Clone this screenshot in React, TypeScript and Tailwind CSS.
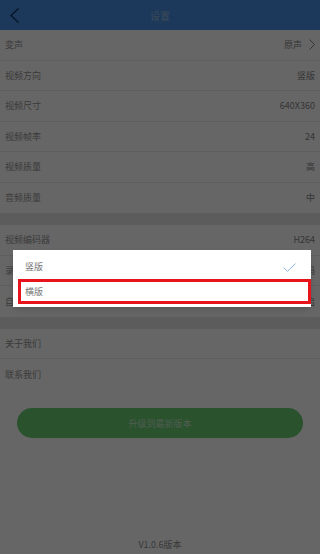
import { useState } from "react";

// Settings screen with a dimmed backdrop and the "视频方向" picker dialog open.

type Row = { label: string; value?: string; arrow?: boolean };

const groups: Row[][] = [
  [
    { label: "变声", value: "原声", arrow: true },
    { label: "视频方向", value: "竖版" },
    { label: "视频尺寸", value: "640X360" },
    { label: "视频帧率", value: "24" },
    { label: "视频质量", value: "高" },
    { label: "音频质量", value: "中" },
  ],
  [
    { label: "视频编码器", value: "H264" },
    { label: "录制模式", value: "软编码" },
    { label: "自动对焦", value: "开启" },
  ],
  [{ label: "关于我们" }, { label: "联系我们" }],
];

const options = ["竖版", "横版"];

function SettingRow({ row, last }: { row: Row; last: boolean }) {
  return (
    <div
      className={[
        "h-[30.5px] flex items-center justify-between pl-[5px] pr-[5px] bg-white",
        last ? "" : "border-b border-[#ececec]",
      ].join(" ")}
    >
      <span className="text-[9px] text-[#949494]">{row.label}</span>
      {row.value && (
        <span className="flex items-center gap-[7px] text-[9px] text-[#858585]">
          {row.value}
          {row.arrow && (
            <svg width="6" height="11" viewBox="0 0 6 11" fill="none" stroke="#858585" strokeWidth="1">
              <polyline points="0.5,0.5 5.5,5.5 0.5,10.5" />
            </svg>
          )}
        </span>
      )}
    </div>
  );
}

export default function App() {
  const [selected, setSelected] = useState(0);

  return (
    <div
      className="relative w-[320px] h-[554px] overflow-hidden bg-white flex flex-col"
      style={{ fontFamily: '"Noto Sans CJK SC", Roboto, sans-serif' }}
    >
      {/* Header */}
      <div className="h-[30px] shrink-0 bg-[#4690e6] flex items-center relative">
        <svg className="absolute left-[10px] top-[8px]" width="9" height="15" viewBox="0 0 9 15" fill="none" stroke="#10305a" strokeWidth="1.3">
          <polyline points="8.5,0.5 1,7.5 8.5,14.5" />
        </svg>
        <span className="flex-1 text-center text-[10px] text-[#9ab8d8]">设置</span>
      </div>

      {/* Setting groups */}
      {groups.map((g, gi) => (
        <div key={gi} className={gi > 0 ? "border-t-[12px] border-[#e6e6e6]" : ""}>
          {g.map((r, ri) => (
            <SettingRow key={r.label} row={r} last={ri === g.length - 1} />
          ))}
        </div>
      ))}

      <div className="px-[17px] pt-[18px]">
        <button className="w-full h-[30px] rounded-full bg-[#66cc72] text-[9px] text-[#c8e6ca]">
          升级到最新版本
        </button>
      </div>

      <div className="flex-1" />
      <div className="pb-[3px] text-center text-[9px] text-[#8c8c8c]">V1.0.6版本</div>

      {/* Dim backdrop */}
      <div className="absolute inset-0 bg-[rgba(0,0,0,0.6)]" />

      {/* Picker dialog */}
      <div className="absolute left-[13px] top-[250px] w-[298px] bg-white shadow-md pt-[5px] pb-[3px]">
        {options.map((o, i) => (
          <button
            key={o}
            onClick={() => setSelected(i)}
            className={[
              "flex items-center justify-between text-left text-[9px] text-[#777]",
              i === 1
                ? "h-[25px] ml-[5px] w-[293px] border-[3px] border-[#e8141c] pl-[4px]"
                : "w-full h-[24px] pl-[12px] pr-[15px]",
            ].join(" ")}
          >
            {o}
            {selected === i && i === 0 && (
              <svg width="13" height="9" viewBox="0 0 13 9" fill="none" stroke="#8cb6de" strokeWidth="1">
                <polyline points="0.5,4.5 4.5,8.3 12.5,0.5" />
              </svg>
            )}
          </button>
        ))}
      </div>
    </div>
  );
}
